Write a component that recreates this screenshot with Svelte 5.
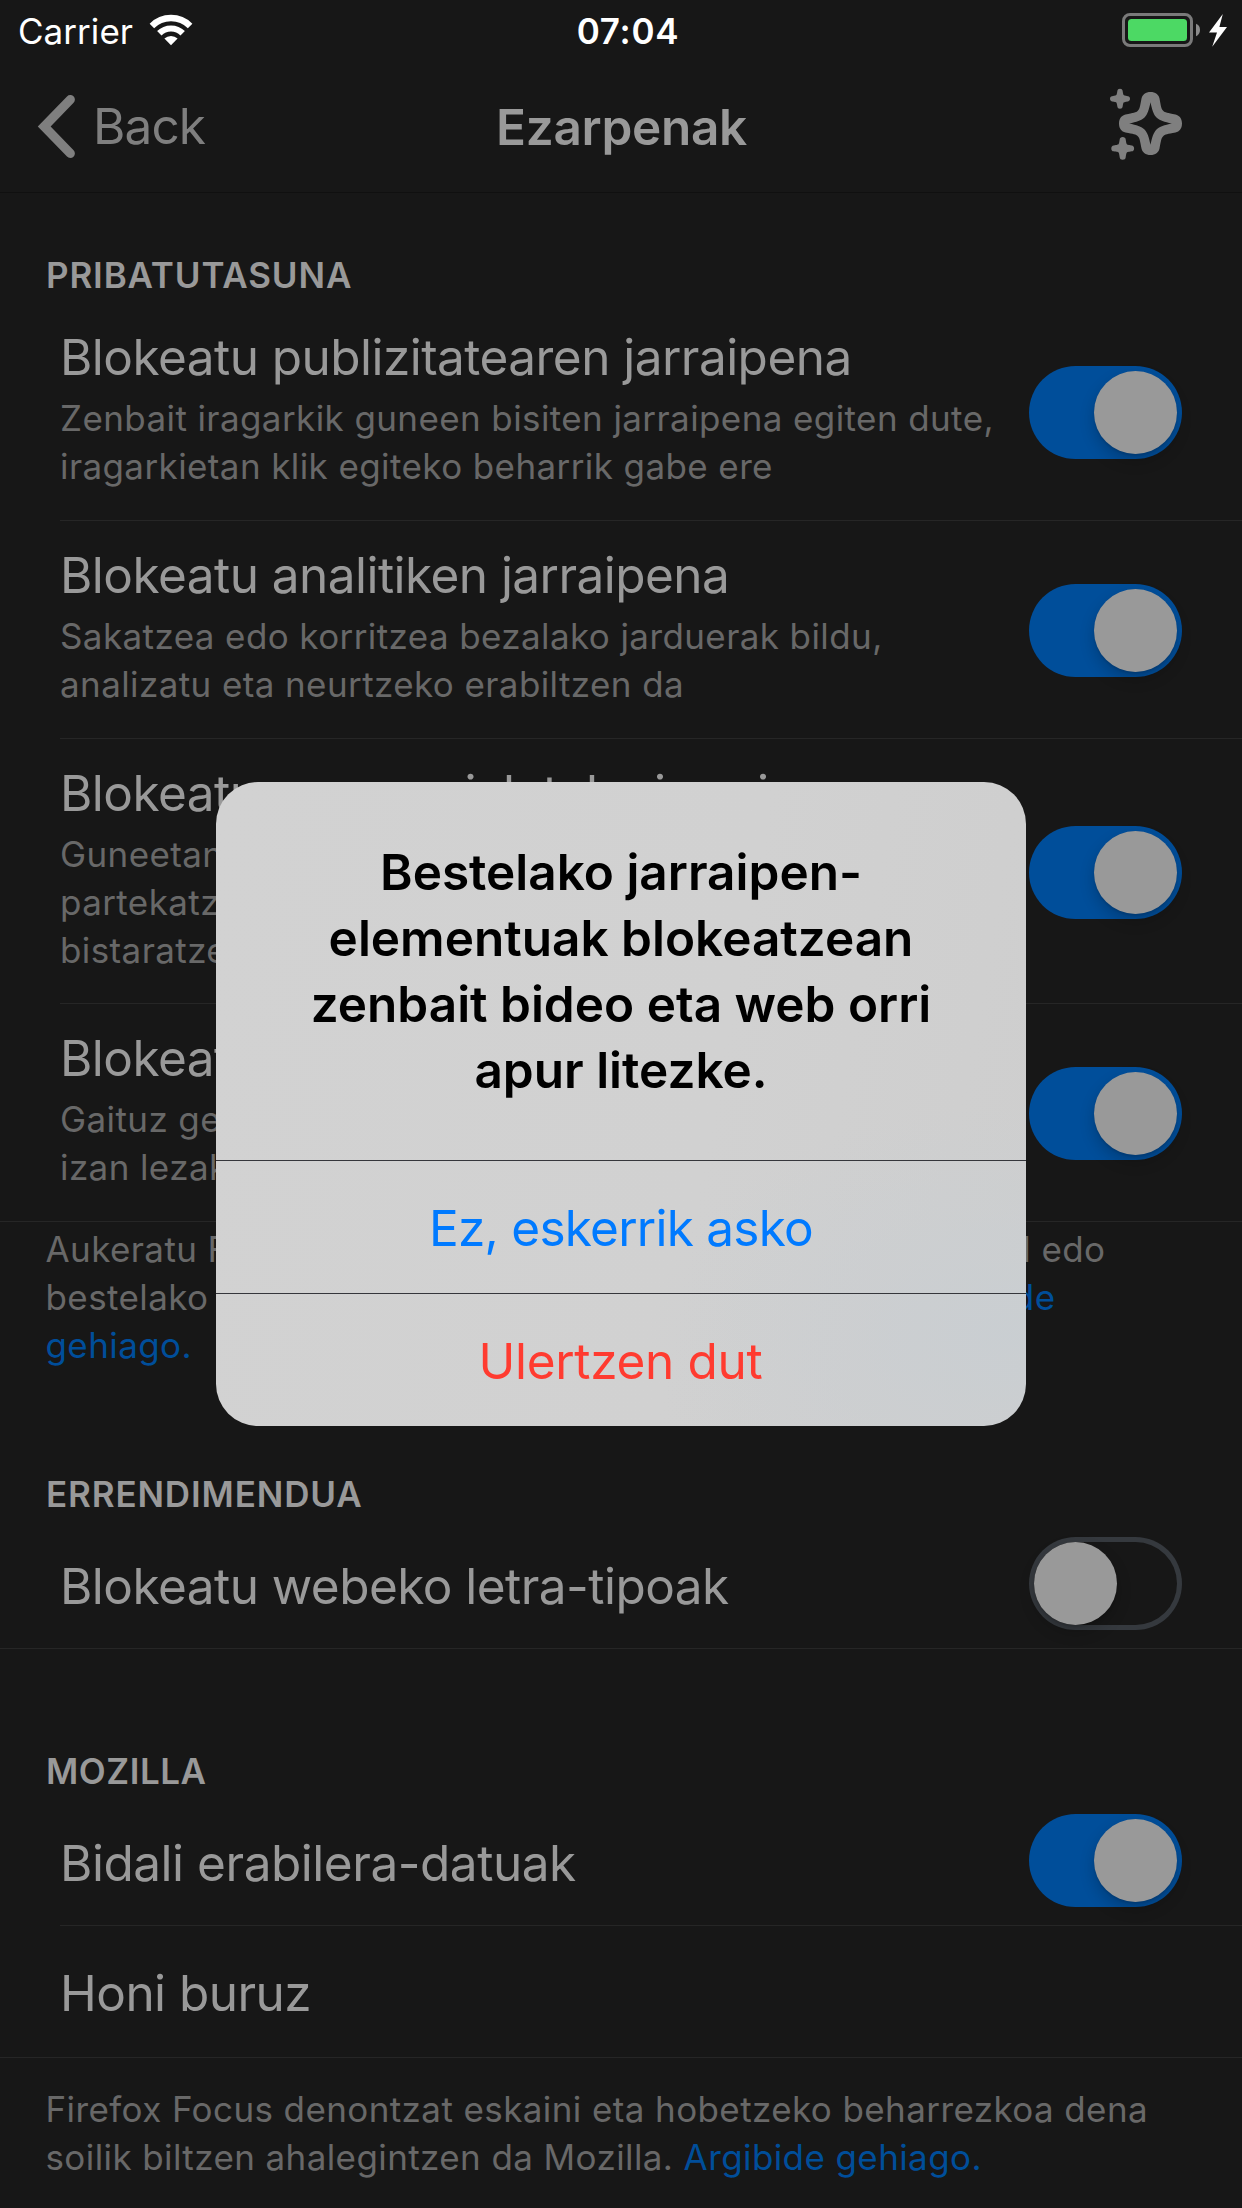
<script>
  // Builds a four-fold symmetric outline from the curves of its first quadrant.
  function fourFold(start, curves) {
    const turn = ([x, y], n) => (n === 0 ? [x, y] : turn([-y, x], n - 1));
    let d = `M${start.join(' ')}`;
    for (let n = 0; n < 4; n++) {
      for (const c of curves) d += 'C' + c.map((p) => turn(p, n).join(' ')).join(' ');
    }
    return d + 'Z';
  }

  const bigStar =
    fourFold([0, -31.5], [
      [[5, -31.5], [8, -29], [9, -25]],
      [[10.5, -17], [10.8, -14.6], [12.7, -12.7]],
      [[14.6, -10.8], [17, -10.5], [25, -9]],
      [[29, -8], [31.5, -5], [31.5, 0]],
    ]) +
    fourFold([0, -21.3], [
      [[1.5, -14], [3, -9], [6, -6]],
      [[9, -3], [14, -1.5], [21.3, 0]],
    ]);

  const smallStar = fourFold([0, -10], [
    [[1.6, -10], [2.4, -9.2], [2.6, -8]],
    [[3.1, -4.6], [3.4, -4], [3.7, -3.7]],
    [[4, -3.4], [4.6, -3.1], [8, -2.6]],
    [[9.2, -2.4], [10, -1.6], [10, 0]],
  ]);

  const privacy = [
    {
      title: 'Blokeatu publizitatearen jarraipena',
      lines: ['Zenbait iragarkik guneen bisiten jarraipena egiten dute,', 'iragarkietan klik egiteko beharrik gabe ere'],
      on: true,
    },
    {
      title: 'Blokeatu analitiken jarraipena',
      lines: ['Sakatzea edo korritzea bezalako jarduerak bildu,', 'analizatu eta neurtzeko erabiltzen da'],
      on: true,
    },
    {
      title: 'Blokeatu sare sozialetako jarraipena',
      lines: ['Guneetan txertatuta, zure bisiten jarraipena egin eta', 'partekatzeko botoiak bezalako eginbideak', 'bistaratzeko erabiltzen da'],
      on: true,
      tall: true,
    },
    {
      title: 'Blokeatu bestelako edukiak',
      lines: ['Gaituz gero, zenbait bideo eta web orri apurtuta', 'izan lezake ondorioa'],
      on: true,
      last: true,
    },
  ];
</script>

{#snippet toggle(on)}
  <div class="toggle" class:on role="switch" aria-checked={on}><div class="knob"></div></div>
{/snippet}

<div class="screen">
  <div class="status">
    <div class="carrier">
      <span>Carrier</span>
      <svg class="wifi" width="44" height="32" viewBox="149 14 44 32">
        <path d="M151.9 25.9A27 27 0 0 1 190.1 25.9" fill="none" stroke="#fff" stroke-width="6.4" />
        <path d="M159.3 33.3A16.6 16.6 0 0 1 182.7 33.3" fill="none" stroke="#fff" stroke-width="6.2" />
        <path d="M164.4 38.6A9.4 9.4 0 0 1 177.6 38.6L171 45.2Z" fill="#fff" />
      </svg>
    </div>
    <div class="clock">07:04</div>
    <svg class="battery" width="106" height="36" viewBox="1122 12 106 36">
      <rect x="1123.5" y="14.5" width="68" height="31" rx="6.5" fill="none" stroke="#7a7a7a" stroke-width="3" />
      <rect x="1128" y="19" width="59" height="22" rx="3.5" fill="#4cd964" />
      <path d="M1196 23.8C1198.6 24.8 1200 27 1200 30S1198.6 35.2 1196 36.2Z" fill="#8b8b8b" />
      <path d="M1222.8 14L1219.4 27H1227L1212.2 46.8L1217 32.4H1209Z" fill="#fff" />
    </svg>
  </div>

  <div class="nav">
    <div class="back">
      <svg width="40" height="70" viewBox="36 92 40 70">
        <path d="M70.3 99.6L44.2 126.5L70.3 153.4" fill="none" stroke="#7f7f7f" stroke-width="9.2" stroke-linecap="round" />
      </svg>
      <span>Back</span>
    </div>
    <div class="title">Ezarpenak</div>
    <svg class="sparkle" width="84" height="84" viewBox="1104 84 84 84" fill="#7f7f7f">
      <path fill-rule="evenodd" transform="translate(1150.5 123.5)" d={bigStar} />
      <path transform="translate(1120 98.8)" d={smallStar} />
      <path transform="translate(1122.7 148.4) scale(1.14)" d={smallStar} />
    </svg>
  </div>

  <h2>PRIBATUTASUNA</h2>
  {#each privacy as row}
    <div class="row detail" class:tall={row.tall} class:last={row.last}>
      <div class="copy">
        <div class="name">{row.title}</div>
        <div class="sub">{#each row.lines as line}<div>{line}</div>{/each}</div>
      </div>
      {@render toggle(row.on)}
    </div>
  {/each}
  <div class="foot first">
    <div class="l1"><span>Aukeratu Firefox Focusek iragarkiak, analitikak,</span><span>sozial edo</span></div>
    <div class="l2"><span>bestelako jarraipen-elementuak blokeatzea.</span><span class="link">Argibide</span></div>
    <div class="link">gehiago.</div>
  </div>

  <h2 class="perf">ERRENDIMENDUA</h2>
  <div class="row single last">
    <div class="name">Blokeatu webeko letra-tipoak</div>
    {@render toggle(false)}
  </div>

  <h2 class="moz">MOZILLA</h2>
  <div class="row single">
    <div class="name usage">Bidali erabilera-datuak</div>
    {@render toggle(true)}
  </div>
  <div class="row about last">
    <div class="name">Honi buruz</div>
  </div>
  <div class="foot second">
    <div>Firefox Focus denontzat eskaini eta hobetzeko beharrezkoa dena</div>
    <div>soilik biltzen ahalegintzen da Mozilla. <span class="link">Argibide gehiago.</span></div>
  </div>

  <div class="alert" role="alertdialog">
    <div class="message">Bestelako jarraipen-<br />elementuak blokeatzean<br />zenbait bideo eta web orri<br />apur litezke.</div>
    <div class="action cancel">Ez, eskerrik asko</div>
    <div class="action confirm">Ulertzen dut</div>
  </div>
</div>

<style>
  :global(body) { background: #171717; }
  .screen {
    position: relative;
    width: 1242px;
    height: 2208px;
    overflow: hidden;
    background: #171717;
    color: #999;
    font-family: Inter, 'Liberation Sans', sans-serif;
    font-size: 35px;
    white-space: nowrap;
  }
  .status {
    display: grid;
    grid-template-columns: 1fr auto 1fr;
    height: 63px;
    line-height: 63px;
    padding: 0 14px 0 18px;
    color: #fff;
  }
  .carrier { display: flex; gap: 16px; letter-spacing: 0.05px; }
  .wifi { margin-top: 14px; }
  .clock { font-weight: 600; letter-spacing: 0.74px; padding-left: 10px; }
  .battery { justify-self: end; margin-top: 12px; }
  .nav {
    display: grid;
    grid-template-columns: 1fr auto 1fr;
    height: 129px;
    padding: 0 54px 0 36px;
    border-bottom: 1px solid #101010;
    font-size: 49.5px;
  }
  .back { display: flex; gap: 17px; color: #7f7f7f; line-height: 126px; letter-spacing: -0.9px; }
  .back svg { margin-top: 29px; }
  .title { font-weight: 600; line-height: 128px; letter-spacing: -0.3px; margin-left: 19px; }
  .sparkle { justify-self: end; margin-top: 21px; }

  h2 {
    margin: 0;
    padding: 62px 46px 8px;
    font-size: 35px;
    font-weight: 600;
    line-height: 40px;
    letter-spacing: 0.85px;
  }
  h2.perf { padding-top: 105px; }
  h2.moz { padding-top: 102px; letter-spacing: 0.55px; }

  .row {
    box-sizing: border-box;
    display: flex;
    align-items: center;
    justify-content: space-between;
    margin-left: 60px;
    padding-right: 60px;
    border-bottom: 1px solid #262626;
  }
  .row.last { margin-left: 0; padding-left: 60px; }
  .detail { height: 218px; }
  .detail.tall { height: 265px; }
  .single { height: 127px; }
  .about { height: 132px; }
  .copy { align-self: flex-start; width: 960px; padding-top: 24px; }
  .name { font-size: 49.5px; line-height: 60px; letter-spacing: -0.54px; }
  .single .name { padding-top: 2px; }
  .single .usage { letter-spacing: -0.47px; }
  .about .name { padding-top: 3px; }
  .sub { margin-top: 7px; color: #686868; line-height: 48px; letter-spacing: 0.4px; }

  .toggle {
    box-sizing: border-box;
    flex: none;
    display: flex;
    align-items: center;
    width: 153px;
    height: 93px;
    margin-top: 2px;
    padding: 0 5px;
    border-radius: 47px;
    box-shadow: inset 0 0 0 5px #35393e;
  }
  .toggle.on { justify-content: flex-end; background: #004e9a; box-shadow: none; }
  .single .toggle { margin: 0 0 3px; }
  .knob {
    width: 83px;
    height: 83px;
    border-radius: 50%;
    background: #999;
    box-shadow: 0 7px 15px rgba(0, 0, 0, 0.2), 0 2px 2px rgba(0, 0, 0, 0.1);
  }

  .foot { padding-left: 45.5px; color: #686868; line-height: 48px; letter-spacing: 0.4px; }
  .first { padding-top: 3px; }
  .second { padding-top: 27px; }
  .link { color: #004e9a; }
  .l1, .l2 { display: flex; justify-content: space-between; width: 1060px; }
  .l2 { width: 1010px; }

  .alert {
    position: absolute;
    left: 216px;
    top: 782px;
    width: 810px;
    height: 644px;
    border-radius: 42px;
    overflow: hidden;
    background:
      radial-gradient(ellipse 360px 230px at 98% 86%, rgba(201, 206, 210, 0.9), rgba(205, 207, 210, 0)),
      linear-gradient(100deg, #d2d2d2, #d1d1d1 60%, #cecece);
    color: #000;
    font-size: 49.5px;
    text-align: center;
  }
  .message { box-sizing: border-box; height: 378px; padding-top: 57px; font-weight: 600; line-height: 66px; }
  .action { box-sizing: border-box; height: 133px; padding-top: 1px; border-top: 1px solid #35363b; line-height: 132px; }
  .cancel { color: #007aff; letter-spacing: -0.75px; }
  .confirm { color: #ff3b30; letter-spacing: -0.32px; padding-right: 1px; }
</style>
